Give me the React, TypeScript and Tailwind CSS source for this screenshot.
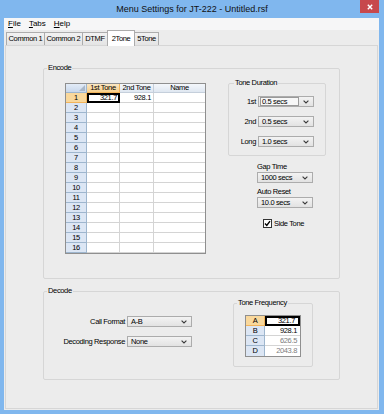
import React from "react";

const font = "font-['Liberation_Sans_Narrow','Liberation_Sans',Arial,sans-serif] tracking-[-0.35px]";

function Chevron() {
  return (
    <svg width="6" height="4" viewBox="0 0 6 4" className="shrink-0">
      <path d="M0.6 0.6 L3 3 L5.4 0.6" fill="none" stroke="#3a3a3a" strokeWidth="1.1" />
    </svg>
  );
}

function Combo({ value, w, focus }: { value: string; w: string; focus?: boolean }) {
  return (
    <div
      className={`${w} h-[11px] flex items-center border border-[#acacac] bg-linear-to-b from-[#f3f3f3] to-[#e2e2e2] pl-px pr-[4px]`}
    >
      <div
        className={
          focus
            ? "flex-1 h-[9px] flex items-center border border-[#9a9a9a] bg-[#f7f7f7] pl-px mr-[4px]"
            : "flex-1 h-[9px] flex items-center pl-[2px]"
        }
      >
        <span className="text-[7.5px] leading-none text-black whitespace-nowrap">{value}</span>
      </div>
      <Chevron />
    </div>
  );
}

function Group({
  title,
  className,
  legendClass,
  children,
}: {
  title: string;
  className: string;
  legendClass: string;
  children: React.ReactNode;
}) {
  return (
    <fieldset className={`border border-[#d6d6d6] rounded-[2px] ${className}`}>
      <legend className={`${legendClass} px-px text-[7.5px] leading-[10px] text-black`}>{title}</legend>
      {children}
    </fieldset>
  );
}

function MenuItem({ k, rest }: { k: string; rest: string }) {
  return (
    <span className="text-[8px] leading-none text-black">
      <span className="underline underline-offset-1">{k}</span>
      {rest}
    </span>
  );
}

function Tab({ label, w, active }: { label: string; w: string; active?: boolean }) {
  return (
    <div
      className={
        active
          ? `${w} h-[16px] -mb-px relative z-10 flex items-center justify-center border border-b-0 border-[#acacac] bg-white text-[7.5px] leading-none whitespace-nowrap`
          : `${w} h-[13px] flex items-center justify-center border border-b-0 border-r-0 border-[#acacac] bg-linear-to-b from-[#f2f2f2] to-[#e4e4e4] text-[7.5px] leading-none whitespace-nowrap`
      }
    >
      {label}
    </div>
  );
}

function EncodeGrid() {
  const rows = Array.from({ length: 16 }, (_, i) => i + 1);
  return (
    <div className="w-[141px] border border-[#8f8f8f] bg-white shrink-0 text-[7.5px] leading-none">
      <div className="flex h-[9px]">
        <div className="w-[21px] relative border-r border-b border-[#9eb6ce] bg-linear-to-b from-[#e3ecf7] to-[#c9d8ec]">
          <svg width="6" height="6" viewBox="0 0 6 6" className="absolute right-[1px] bottom-[1px]">
            <path d="M6 0 L6 6 L0 6 Z" fill="#a9b7c8" />
          </svg>
        </div>
        <div className="w-[33px] flex items-center justify-center border-r border-b border-[#f2b45b] bg-linear-to-b from-[#fbe7c3] to-[#f7cf8a]">
          1st Tone
        </div>
        <div className="w-[34px] flex items-center justify-center border-r border-b border-[#c5cfdb] bg-linear-to-b from-[#f4f7fb] to-[#dfe7f1]">
          2nd Tone
        </div>
        <div className="flex-1 flex items-center justify-center border-b border-[#c5cfdb] bg-linear-to-b from-[#f4f7fb] to-[#dfe7f1]">
          Name
        </div>
      </div>
      {rows.map((r) => (
        <div key={r} className="flex h-[10px]">
          <div
            className={
              r === 1
                ? "w-[21px] flex items-center justify-center border-r border-b border-[#f2b45b] bg-[#f9d89c]"
                : "w-[21px] flex items-center justify-center border-r border-b border-[#9eb6ce] bg-[#dce6f4]"
            }
          >
            {r}
          </div>
          {r === 1 ? (
            <div className="w-[33px] flex items-center justify-end border-2 border-black pr-px">321.7</div>
          ) : (
            <div className="w-[33px] border-r border-b border-[#d4d4d4]" />
          )}
          <div className="w-[34px] flex items-center justify-end border-r border-b border-[#d4d4d4] pr-[2px]">
            {r === 1 ? "928.1" : ""}
          </div>
          <div className="flex-1 border-b border-[#d4d4d4]" />
        </div>
      ))}
    </div>
  );
}

function FreqTable() {
  const data = [
    { k: "A", v: "321.7", sel: true, dim: false },
    { k: "B", v: "928.1", sel: false, dim: false },
    { k: "C", v: "626.5", sel: false, dim: true },
    { k: "D", v: "2043.8", sel: false, dim: true },
  ];
  return (
    <div className="w-[56px] border border-[#8f8f8f] bg-white text-[7.5px] leading-none">
      {data.map((d, i) => (
        <div key={d.k} className="flex h-[10px]">
          <div
            className={
              d.sel
                ? "w-[19px] flex items-center justify-center border-r border-b border-[#f2b45b] bg-[#f9d89c]"
                : i === 3
                  ? "w-[19px] flex items-center justify-center border-r border-[#9eb6ce] bg-[#dce6f4]"
                  : "w-[19px] flex items-center justify-center border-r border-b border-[#9eb6ce] bg-[#dce6f4]"
            }
          >
            {d.k}
          </div>
          <div
            className={
              d.sel
                ? "flex-1 flex items-center justify-end border-2 border-black pr-[3px] text-black"
                : d.dim
                  ? i === 3
                    ? "flex-1 flex items-center justify-end pr-[3px] text-[#7d7d7d]"
                    : "flex-1 flex items-center justify-end border-b border-[#d4d4d4] pr-[3px] text-[#7d7d7d]"
                  : "flex-1 flex items-center justify-end border-b border-[#d4d4d4] pr-[3px] text-black"
            }
          >
            {d.v}
          </div>
        </div>
      ))}
    </div>
  );
}

export default function App() {
  return (
    <div className={`w-[384px] h-[414px] bg-[#80b7ee] flex flex-col overflow-hidden ${font}`}>
      {/* title bar */}
      <div className="h-[18px] relative flex items-center justify-center shrink-0">
        <span className="font-['Liberation_Sans',Arial,sans-serif] tracking-normal text-[9px] leading-none text-[#111]">
          Menu Settings for JT-222 - Untitled.rsf
        </span>
        <div className="absolute right-[5px] top-0 w-[19px] h-[13px] bg-[#c7484c] flex items-center justify-center">
          <svg width="6" height="6" viewBox="0 0 6 6">
            <path d="M0.8 0.8 L5.2 5.2 M5.2 0.8 L0.8 5.2" stroke="#fff" strokeWidth="1.4" />
          </svg>
        </div>
      </div>

      {/* client */}
      <div className="flex-1 ml-[4px] mr-[5px] mb-[4px] bg-[#ececec] flex flex-col">
        {/* menu bar */}
        <div className="h-[12px] bg-[#f6f6f7] flex items-center gap-[8px] pl-[4px] tracking-normal">
          <MenuItem k="F" rest="ile" />
          <MenuItem k="T" rest="abs" />
          <MenuItem k="H" rest="elp" />
        </div>

        {/* tabs */}
        <div className="h-[15px] flex items-end pl-[2px] text-black">
          <Tab label="Common 1" w="w-[38px]" />
          <Tab label="Common 2" w="w-[38px]" />
          <Tab label="DTMF" w="w-[25px]" />
          <Tab label="2Tone" w="w-[28px]" active />
          <div className="w-[24px] h-[13px] flex items-center justify-center border border-b-0 border-l-0 border-[#acacac] bg-linear-to-b from-[#f2f2f2] to-[#e4e4e4] text-[7.5px] leading-none">
            5Tone
          </div>
        </div>

        {/* tab page */}
        <div className="flex-1 mx-px mb-px border border-[#d6d6d6] bg-[#ececec] flex flex-col text-black">
          {/* Encode */}
          <Group title="Encode" className="ml-[37px] mt-[17px] w-[297px]" legendClass="ml-[3px]">
            <div className="flex items-start pl-[21px] pb-[24px]">
              <div className="mt-[10px]">
                <EncodeGrid />
              </div>
              <div className="ml-[22px] w-[98px] mt-[5px] flex flex-col">
                <Group title="Tone Duration" className="w-[98px]" legendClass="ml-[5px]">
                  <div className="grid grid-cols-[27px_56px] gap-x-[2px] gap-y-[9px] mt-[8px] pb-[8px] text-[7.5px] leading-none items-center">
                    <div className="text-right">1st</div>
                    <Combo value="0.5 secs" w="w-[56px]" focus />
                    <div className="text-right">2nd</div>
                    <Combo value="0.5 secs" w="w-[56px]" />
                    <div className="text-right">Long</div>
                    <Combo value="1.0 secs" w="w-[56px]" />
                  </div>
                </Group>
                <div className="ml-[29px] mt-[6px] text-[7.5px] leading-[9px]">Gap Time</div>
                <div className="ml-[29px] mt-px">
                  <Combo value="1000 secs" w="w-[56px]" />
                </div>
                <div className="ml-[29px] mt-[4px] text-[7.5px] leading-[9px]">Auto Reset</div>
                <div className="ml-[29px] mt-px">
                  <Combo value="10.0 secs" w="w-[56px]" />
                </div>
                <div className="ml-[35px] mt-[11px] flex items-center gap-[2px]">
                  <div className="w-[9px] h-[9px] border border-[#333] bg-white flex items-center justify-center">
                    <svg width="7" height="7" viewBox="0 0 7 7">
                      <path d="M1 3.6 L2.8 5.4 L6 1.2" fill="none" stroke="#000" strokeWidth="1.4" />
                    </svg>
                  </div>
                  <span className="text-[7.5px] leading-none">Side Tone</span>
                </div>
              </div>
            </div>
          </Group>

          {/* Decode */}
          <Group title="Decode" className="ml-[37px] mt-[7px] w-[297px]" legendClass="ml-[3px]">
            <div className="flex items-start pb-[12px]">
              <div className="mt-[20px] grid grid-cols-[83px_65px] gap-y-[9px] items-center text-[7.5px] leading-none">
                <div className="text-right pr-[2px] whitespace-nowrap">Call Format</div>
                <Combo value="A-B" w="w-[65px]" />
                <div className="text-right pr-[2px] whitespace-nowrap">Decoding Response</div>
                <Combo value="None" w="w-[65px]" />
              </div>
              <Group title="Tone Frequency" className="ml-[41px] mt-[2px] w-[80px]" legendClass="ml-[3px]">
                <div className="ml-[11px] mt-[7px] pb-[9px]">
                  <FreqTable />
                </div>
              </Group>
            </div>
          </Group>
        </div>
      </div>
    </div>
  );
}
